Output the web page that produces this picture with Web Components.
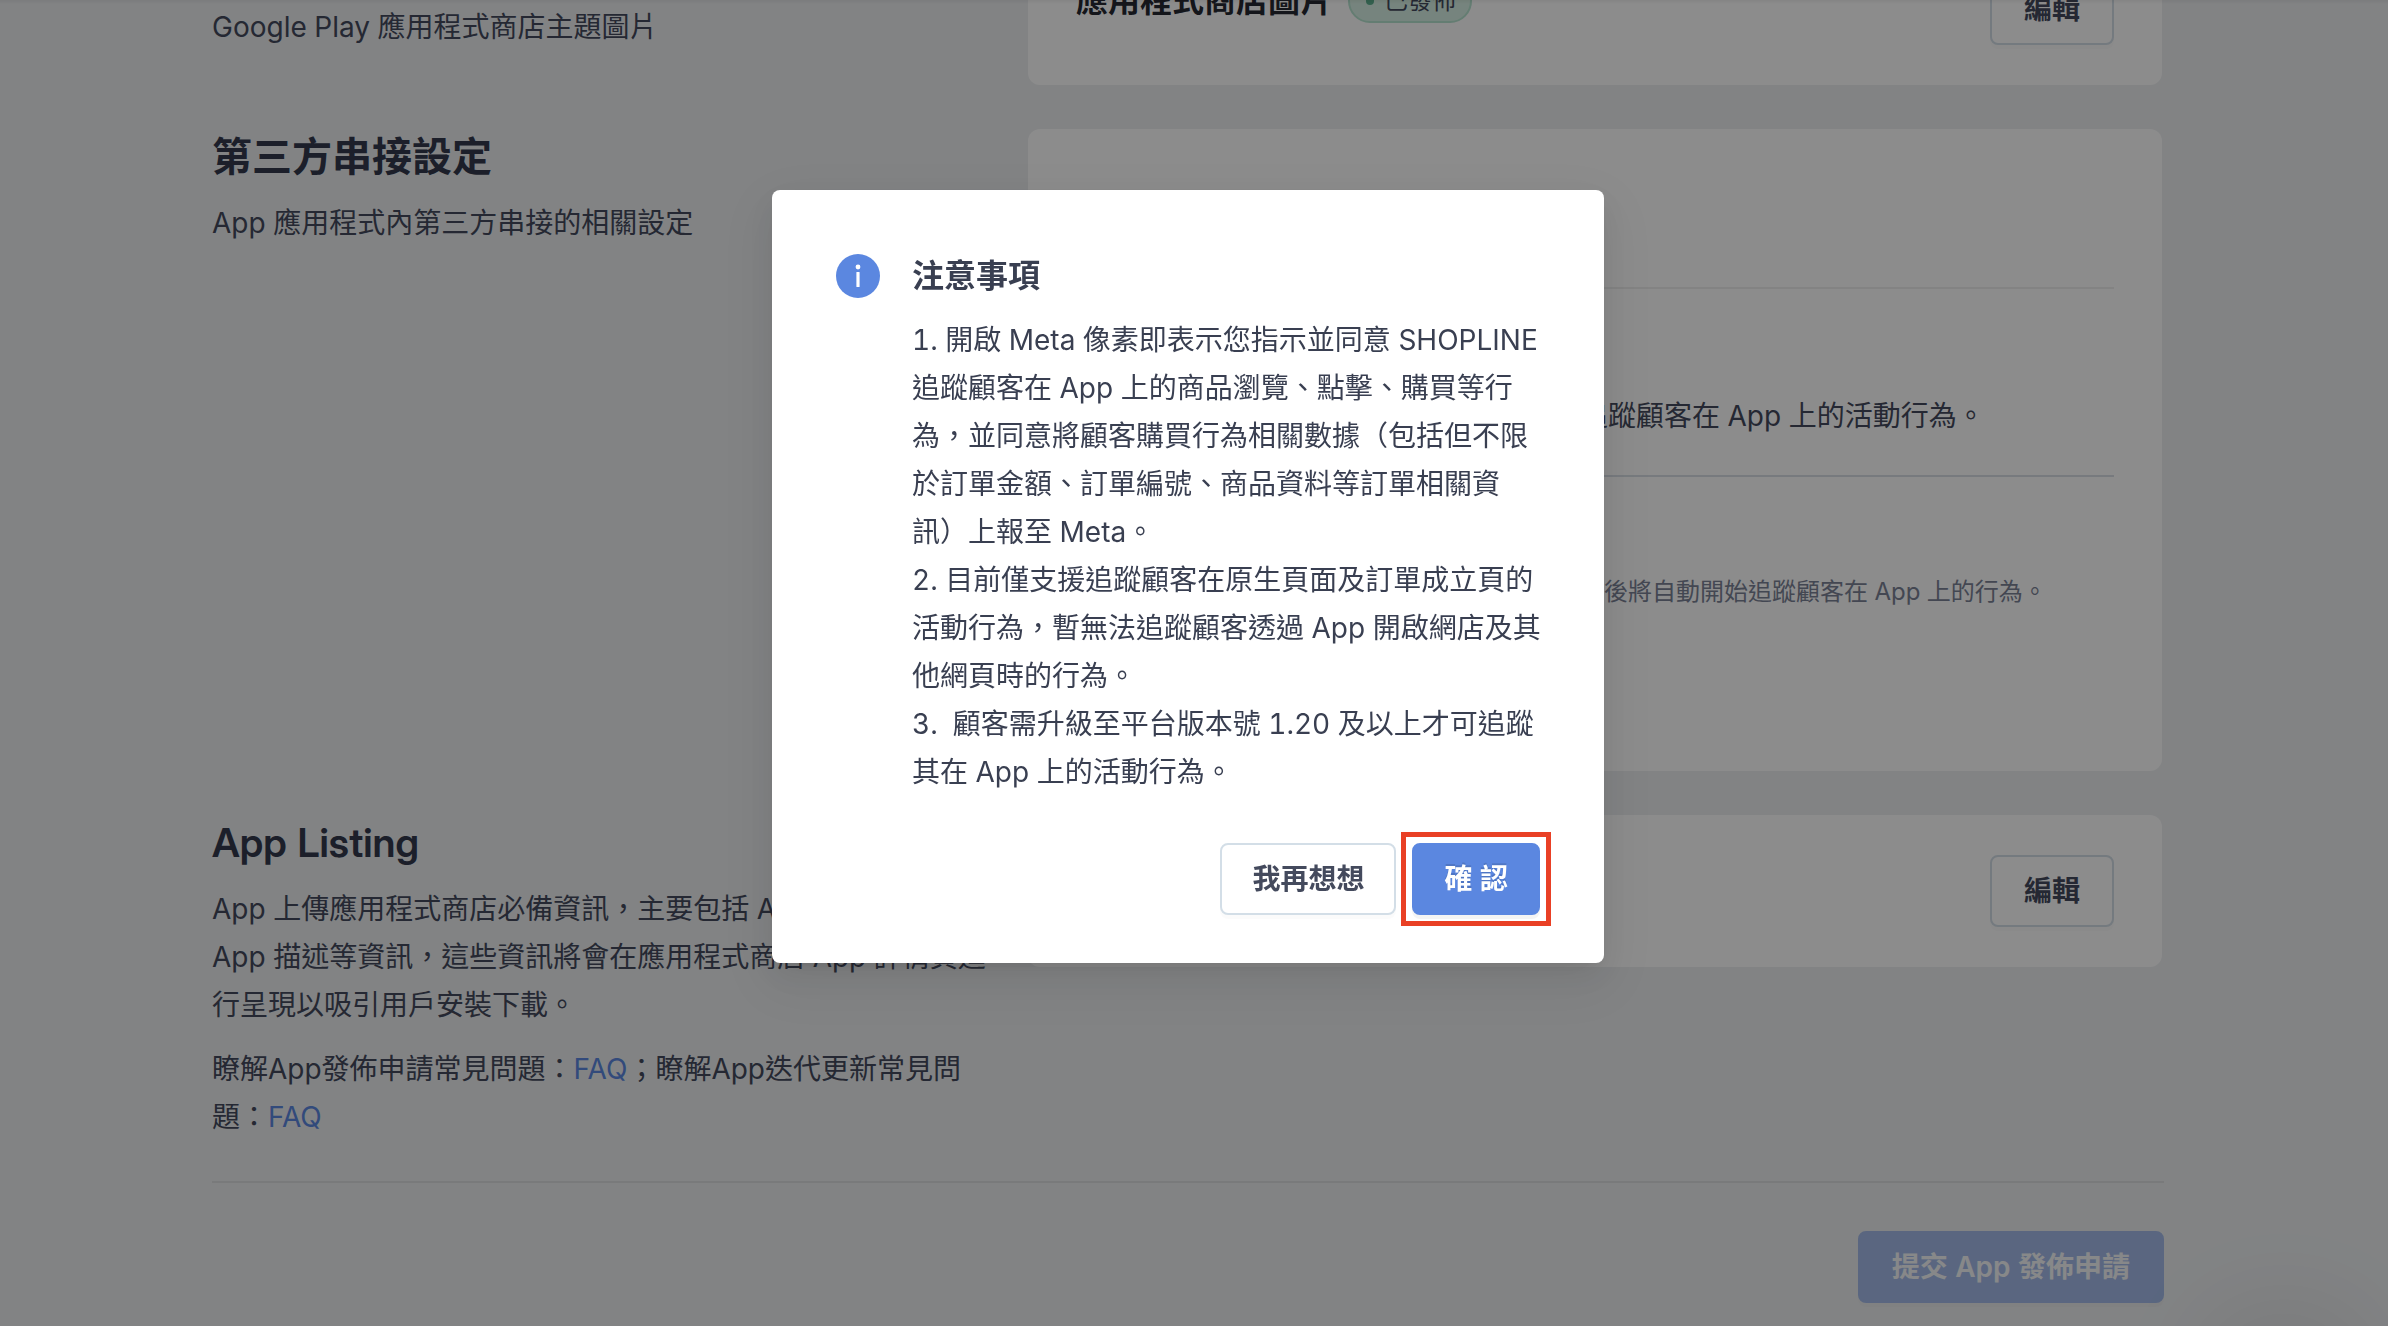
<!DOCTYPE html>
<html lang="zh-Hant">
<head>
<meta charset="utf-8">
<meta name="viewport" content="width=device-width, initial-scale=1">
<title>App 發佈設定</title>
<style>
  :root {
    --text: #444a5d;
    --heading: #343a4e;
    --muted: #7b8296;
    --primary: #5b87e0;
    --border: #d3dee7;
    --line: #dcdee1;
    --page: #edeff1;
  }
  html, body { height: 100%; }
  body {
    margin: 0;
    overflow: hidden;
    background: var(--page);
    color: var(--text);
    font: 400 28px/48px Inter, "Noto Sans CJK TC", sans-serif;
    font-variant-numeric: tabular-nums;
  }
  p { margin: 0; }
  a { color: var(--primary); text-decoration: none; }
</style>
</head>
<body>
<settings-page>
  <settings-section heading="商店圖片">
    <p slot="about">Google Play 應用程式商店主題圖片</p>
    <setting-card>
      <card-title>應用程式商店圖片<status-badge slot="badge">已發佈</status-badge></card-title>
      <app-button slot="action" size="edit">編輯</app-button>
    </setting-card>
  </settings-section>

  <settings-section heading="第三方串接設定">
    <p slot="about">App 應用程式內第三方串接的相關設定</p>
    <integration-card>
      <span slot="summary">開啟像素追蹤功能後，商店即可自動開始追蹤顧客在 App 上的活動行為。</span>
      <span slot="hint">請先填寫您的像素編號並確認設定內容無誤，儲存後將自動開始追蹤顧客在 App 上的行為。</span>
    </integration-card>
  </settings-section>

  <settings-section heading="App Listing">
    <p slot="about">App 上傳應用程式商店必備資訊，主要包括 App 名稱、圖示、<br>App 描述等資訊，這些資訊將會在應用程式商店 App 詳情頁進<br>行呈現以吸引用戶安裝下載。</p>
    <p slot="about">瞭解App發佈申請常見問題：<a href="#faq-publish">FAQ</a>；瞭解App迭代更新常見問<br>題：<a href="#faq-update">FAQ</a></p>
    <setting-card>
      <app-button slot="action" size="edit">編輯</app-button>
    </setting-card>
  </settings-section>

  <app-button slot="footer" variant="disabled">提交 App 發佈申請</app-button>
</settings-page>

<chat-launcher></chat-launcher>

<notice-dialog heading="注意事項">
  <p>1. 開啟 Meta 像素即表示您指示並同意 SHOPLINE<br>追蹤顧客在 App 上的商品瀏覽、點擊、購買等行<br>為，並同意將顧客購買行為相關數據（包括但不限<br>於訂單金額、訂單編號、商品資料等訂單相關資<br>訊）上報至 Meta。</p>
  <p>2. 目前僅支援追蹤顧客在原生頁面及訂單成立頁的<br>活動行為，暫無法追蹤顧客透過 App 開啟網店及其<br>他網頁時的行為。</p>
  <p>3. &nbsp;顧客需升級至平台版本號 1.20 及以上才可追蹤<br>其在 App 上的活動行為。</p>
  <app-button slot="actions">我再想想</app-button>
  <focus-frame slot="actions"><app-button variant="primary">確 認</app-button></focus-frame>
</notice-dialog>

<script>
  const define = (name, html) => {
    const template = document.createElement('template');
    template.innerHTML = html;
    customElements.define(name, class extends HTMLElement {
      constructor() {
        super();
        this.attachShadow({ mode: 'open' }).append(template.content.cloneNode(true));
      }
      connectedCallback() {
        const heading = this.shadowRoot.querySelector('[data-heading]');
        if (heading) heading.textContent = this.getAttribute('heading');
        const button = this.shadowRoot.querySelector('button');
        if (button) button.disabled = this.getAttribute('variant') === 'disabled';
      }
    });
  };

  define('app-button', `
    <style>
      :host { display: block; flex: none; }
      button {
        box-sizing: border-box; display: block; height: 72px; padding: 0 30px;
        border: 2px solid var(--border); border-radius: 8px;
        background: #fff; color: var(--text); cursor: pointer;
        font: inherit; font-weight: 600; line-height: 48px; white-space: nowrap;
        box-shadow: 0 4px 0 rgba(0, 0, 0, .016);
      }
      :host([size="edit"]) button { min-width: 124px; }
      :host([variant="primary"]) button {
        background: var(--primary); border-color: var(--primary); color: #fff;
        text-shadow: 0 -2px 0 rgba(0, 0, 0, .12); box-shadow: 0 4px 0 rgba(0, 0, 0, .045);
      }
      :host([variant="disabled"]) button {
        background: #a4bbe9; border-color: #a4bbe9; color: #f6f8fa; padding: 0 32px; cursor: default;
      }
    </style>
    <button type="button"><slot></slot></button>`);

  define('status-badge', `
    <style>
      :host {
        box-sizing: border-box; display: flex; align-items: center; gap: 10px;
        height: 44px; padding: 0 14px 0 16px; border: 2px solid #b6e3d0; border-radius: 22px;
        background: #d8f1e5; color: var(--text); font-size: 24px; font-weight: 400; line-height: 40px;
      }
      i { width: 8px; height: 8px; border-radius: 50%; background: #5cb08f; }
    </style>
    <i></i><slot></slot>`);

  define('card-title', `
    <style>
      :host { display: block; }
      h3 { display: flex; align-items: center; gap: 16px; margin: 0; color: #262832; font-size: 32px; font-weight: 600; line-height: 56px; }
    </style>
    <h3><slot></slot><slot name="badge"></slot></h3>`);

  define('setting-card', `
    <style>
      :host { display: flex; align-items: flex-start; justify-content: space-between; padding: 40px 48px; border-radius: 12px; background: #fff; }
      .action { margin-left: auto; }
    </style>
    <slot></slot><div class="action"><slot name="action"></slot></div>`);

  define('integration-card', `
    <style>
      :host { display: block; padding: 0 48px; border-radius: 12px; background: #fff; }
      header { height: 158px; }
      .summary { padding: 103px 0 35px; border-top: 2px solid #eeefef; border-bottom: 2px solid #d9dfe6; }
      .hint { padding: 95px 0 159px; color: var(--muted); font-size: 24px; line-height: 40px; }
    </style>
    <header></header>
    <div class="summary"><slot name="summary"></slot></div>
    <div class="hint"><slot name="hint"></slot></div>`);

  define('settings-section', `
    <style>
      :host { display: grid; grid-template-columns: 816fr 1134fr; align-items: start; padding-right: 2px; }
      .about { display: flex; flex-direction: column; gap: 16px; padding-right: 24px; }
      h2 { margin: 0 0 14px; color: var(--heading); font-family: "Inter Display", Inter, "Noto Sans CJK TC", sans-serif; font-size: 40px; font-weight: 600; line-height: 56px; }
    </style>
    <div><h2 data-heading></h2><div class="about"><slot name="about"></slot></div></div>
    <div><slot></slot></div>`);

  define('settings-page', `
    <style>
      :host { display: block; padding-right: 12px; }
      main { display: flex; flex-direction: column; gap: 44px; max-width: 1952px; margin: -67px auto 0; }
      footer { display: flex; justify-content: flex-end; padding-top: 48px; border-top: 2px solid var(--line); margin-top: -4px; }
    </style>
    <main><slot></slot><footer><slot name="footer"></slot></footer></main>`);

  define('chat-launcher', `
    <style>
      :host { position: fixed; right: 44px; bottom: -124px; width: 120px; height: 120px; border-radius: 50%; box-shadow: 0 0 120px rgba(0, 0, 0, .16); }
    </style>`);

  define('focus-frame', `
    <style>
      :host { display: block; position: relative; }
      :host::after { content: ""; position: absolute; inset: -11px; border: 5px solid #e94025; pointer-events: none; }
    </style>
    <slot></slot>`);

  define('notice-dialog', `
    <style>
      :host {
        position: fixed; inset: 0; display: flex; align-items: flex-start; justify-content: center;
        padding: 190px 12px 0 0;
        background: linear-gradient(rgba(0, 0, 0, .06), transparent) 0 0 / 100% 4px no-repeat rgba(0, 0, 0, .45);
      }
      section {
        box-sizing: border-box; width: 832px; padding: 64px 64px 48px; border-radius: 8px; background: #fff; color: #393f51;
        box-shadow: 0 6px 12px -8px rgba(0,0,0,.12), 0 12px 32px rgba(0,0,0,.08), 0 18px 56px 16px rgba(0,0,0,.05);
      }
      .body { display: grid; grid-template-columns: 44px 1fr; column-gap: 32px; }
      svg { display: block; width: 44px; height: 44px; }
      h1 { margin: 0 0 18px; font-size: 32px; font-weight: 600; line-height: 44px; }
      .text { white-space: nowrap; }
      footer { display: flex; justify-content: flex-end; gap: 16px; margin-top: 47px; }
    </style>
    <section role="dialog" aria-modal="true" aria-labelledby="title">
      <div class="body">
        <svg viewBox="0 0 44 44" aria-hidden="true">
          <circle cx="22" cy="22" r="22" fill="#5b87e0"/>
          <circle cx="22" cy="13" r="2.4" fill="#fff"/>
          <rect x="20.4" y="18" width="3.2" height="15" rx=".6" fill="#fff"/>
        </svg>
        <div>
          <h1 id="title" data-heading></h1>
          <div class="text"><slot></slot></div>
        </div>
      </div>
      <footer><slot name="actions"></slot></footer>
    </section>`);
</script>
</body>
</html>
